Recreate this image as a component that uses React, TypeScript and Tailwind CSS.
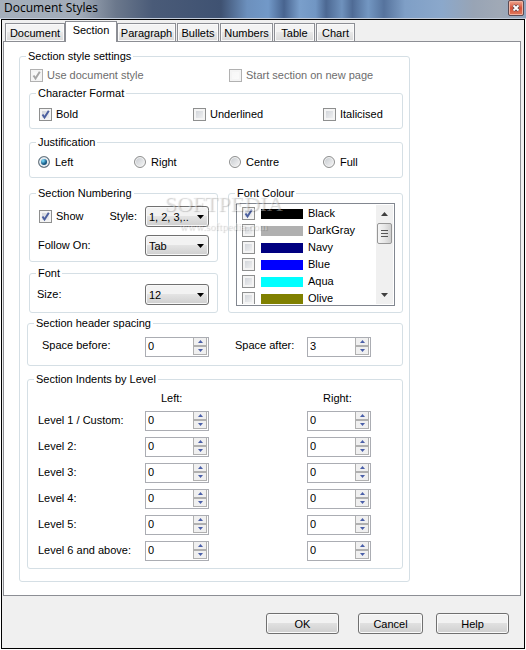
import { ReactNode, useId, useState } from "react";

const COLOURS = [
  { name: "Black", swatch: "bg-black" },
  { name: "DarkGray", swatch: "bg-[#b0b0b0]" },
  { name: "Navy", swatch: "bg-[#000080]" },
  { name: "Blue", swatch: "bg-[#0000ff]" },
  { name: "Aqua", swatch: "bg-[#00ffff]" },
  { name: "Olive", swatch: "bg-[#808000]" },
];

const LEVELS = ["Level 1 / Custom:", "Level 2:", "Level 3:", "Level 4:", "Level 5:", "Level 6 and above:"];

const TABS = [
  { name: "Document", width: "w-[60px]" },
  { name: "Section", width: "w-[52px]" },
  { name: "Paragraph", width: "w-[59px]" },
  { name: "Bullets", width: "w-[42px]" },
  { name: "Numbers", width: "w-[53px]" },
  { name: "Table", width: "w-[41px]" },
  { name: "Chart", width: "w-[39px]" },
];

function Group({ title, className = "", children }: { title: string; className?: string; children: ReactNode }) {
  return (
    <fieldset className={`min-w-0 rounded-[3px] border border-[#d5dfe5] ${className}`}>
      <legend className="ml-1.5 h-3.5 px-0.5 leading-[14px]">{title}</legend>
      {children}
    </fieldset>
  );
}

function CheckBox({ label, on = false, disabled = false }: { label: string; on?: boolean; disabled?: boolean }) {
  const [checked, setChecked] = useState(on);
  return (
    <label className={`flex h-4 items-center gap-1 ${disabled ? "text-[#6d6d6d]" : ""}`}>
      <CheckMark checked={checked} disabled={disabled} onChange={setChecked} />
      {label}
    </label>
  );
}

function CheckMark({ checked, disabled = false, onChange }: { checked: boolean; disabled?: boolean; onChange: (v: boolean) => void }) {
  return (
    <span className="grid size-[13px] shrink-0">
      <input
        type="checkbox"
        checked={checked}
        disabled={disabled}
        onChange={(e) => onChange(e.target.checked)}
        className="col-start-1 row-start-1 size-[13px] appearance-none border border-[#8e8f8f] bg-linear-to-br from-[#cbcfd5] to-[#f6f6f6] shadow-[inset_0_0_0_2px_#f4f4f4] disabled:border-[#b1b1b1] disabled:from-[#f6f6f6] disabled:to-[#fbfbfb]"
      />
      {checked && (
        <svg viewBox="0 0 13 13" className="pointer-events-none col-start-1 row-start-1 size-[13px]" fill="none" stroke={disabled ? "#a5a5a5" : "#4b5f9f"} strokeWidth="2">
          <path d="M3.5 6.5 5.5 9.5 9.8 2.8" />
        </svg>
      )}
    </span>
  );
}

function Radio({ label, on = false }: { label: string; on?: boolean }) {
  return (
    <label className="flex h-4 items-center gap-[5px]">
      <input
        type="radio"
        name="justification"
        defaultChecked={on}
        className="size-3 shrink-0 appearance-none rounded-full border border-[#8e8f8f] bg-linear-to-br from-[#c4c8cd] to-[#f8f8f8] shadow-[inset_0_0_0_1px_#f4f4f4] checked:border-[#6f7880] checked:bg-radial-[at_40%_35%] checked:from-[#6cc8ea] checked:from-10% checked:via-[#155a85] checked:via-40% checked:to-[#0b2c49] checked:shadow-[inset_0_0_0_2px_#e6eaee]"
      />
      {label}
    </label>
  );
}

function Picker({ id, value, options }: { id: string; value: string; options: string[] }) {
  return (
    <span className="grid w-16 shrink-0 items-center">
      <select
        id={id}
        defaultValue={value}
        className="col-start-1 row-start-1 h-[21px] w-16 appearance-none rounded-[3px] border border-[#707070] bg-linear-to-b from-[#f2f2f2] from-45% via-[#e3e3e3] via-50% to-[#cfcfcf] pl-[3px] pr-3 text-[11px] leading-[18px] shadow-[inset_0_0_0_1px_#f8f8f8]"
      >
        {options.map((o) => (
          <option key={o}>{o}</option>
        ))}
      </select>
      <svg viewBox="0 0 7 4" className="pointer-events-none col-start-1 row-start-1 mr-[5px] h-1 w-[7px] justify-self-end">
        <path d="M0 0h7L3.5 4z" />
      </svg>
    </span>
  );
}

function Spinner({ id, label, start = 0 }: { id?: string; label?: string; start?: number }) {
  const [value, setValue] = useState(start);
  return (
    <span className="flex h-5 w-16 shrink-0 border border-[#abadb3] bg-white">
      <input
        id={id}
        aria-label={label}
        value={value}
        onChange={(e) => setValue(Number(e.target.value) || 0)}
        className="h-4 min-w-0 flex-1 pl-0.5 text-[11px] leading-4 outline-none"
      />
      <span className="mr-px mb-px flex w-3.5 flex-col border-x border-b border-[#b0b0b0]">
        <button type="button" aria-label="Increase" onClick={() => setValue(value + 1)} className="flex h-2 items-center justify-center border-b border-[#b0b0b0] bg-[#f0f0f0]">
          <svg viewBox="0 0 5 3" className="h-[3px] w-[5px]" fill="#4a5fa8">
            <path d="M0 3h5L2.5 0z" />
          </svg>
        </button>
        <button type="button" aria-label="Decrease" onClick={() => setValue(value - 1)} className="flex flex-1 items-center justify-center border-t border-[#b0b0b0] bg-[#f0f0f0]">
          <svg viewBox="0 0 5 3" className="h-[3px] w-[5px]" fill="#4a5fa8">
            <path d="M0 0h5L2.5 3z" />
          </svg>
        </button>
      </span>
    </span>
  );
}

function ColourList() {
  const [chosen, setChosen] = useState("Black");
  return (
    <div className="flex h-[103px] border border-[#828790] bg-white p-px">
      <div className="flex-1 overflow-hidden pl-1">
        {COLOURS.map((c) => (
          <label key={c.name} className="flex h-[17px] items-center">
            <CheckMark checked={chosen === c.name} onChange={() => setChosen(c.name)} />
            <span className={`ml-1.5 h-2.5 w-[42px] ${c.swatch}`} />
            <span className="ml-[5px]">{c.name}</span>
          </label>
        ))}
      </div>
      <div className="flex w-[17px] flex-col items-center bg-[#f0f0f0]">
        <button type="button" aria-label="Scroll up" className="flex h-[18px] w-full items-center justify-center">
          <svg viewBox="0 0 7 4" className="h-1 w-[7px]" fill="#404040">
            <path d="M0 4h7L3.5 0z" />
          </svg>
        </button>
        <div className="flex h-[21px] w-[15px] flex-col items-center justify-center gap-0.5 rounded-[2px] border border-[#979797] bg-linear-to-r from-[#f5f5f5] via-[#e6e6e6] to-[#cfcfcf]">
          <span className="h-px w-[7px] bg-[#555]" />
          <span className="h-px w-[7px] bg-[#555]" />
          <span className="h-px w-[7px] bg-[#555]" />
        </div>
        <button type="button" aria-label="Scroll down" className="mt-auto flex h-[18px] w-full items-center justify-center">
          <svg viewBox="0 0 7 4" className="h-1 w-[7px]" fill="#404040">
            <path d="M0 0h7L3.5 4z" />
          </svg>
        </button>
      </div>
    </div>
  );
}

function TabStrip() {
  return (
    <div role="tablist" className="flex h-[21px] items-end gap-px pl-[3px]">
      {TABS.map((t) =>
        t.name === "Section" ? (
          <button key={t.name} role="tab" aria-selected="true" className={`relative -mx-px -mb-px h-[21px] ${t.width} border border-b-0 border-[#8c8e94] bg-white pb-1 leading-4`}>
            {t.name}
          </button>
        ) : (
          <button key={t.name} role="tab" aria-selected="false" className={`h-[18px] ${t.width} border border-b-0 border-[#8c8e94] bg-linear-to-b from-[#f3f3f3] from-45% via-[#e8e8e8] via-50% to-[#dadada] leading-4 shadow-[inset_0_0_0_1px_#fafafa]`}>
            {t.name}
          </button>
        ),
      )}
    </div>
  );
}

function PushButton({ children, width = "w-[73px]" }: { children: ReactNode; width?: string }) {
  return (
    <button
      type="button"
      className={`h-[21px] ${width} rounded-[3px] border border-[#707070] bg-linear-to-b from-[#f2f2f2] from-45% via-[#e0e0e0] via-50% to-[#cfcfcf] leading-[18px] shadow-[inset_0_0_0_1px_#fafafa]`}
    >
      {children}
    </button>
  );
}

export default function App() {
  const id = useId();
  return (
    <div className="bg-white font-['Liberation_Sans',Arial,sans-serif] text-[11px] text-black">
      <header className="flex h-[19px] items-start justify-between border-b border-[#c3ccda] bg-[linear-gradient(90deg,#a5afbb_0%,#a2acb9_15%,#6b788c_22%,#4a5b78_29%,#3f5272_42%,#6c90bd_47%,#7299c8_51%,#48648f_54%,#7a9fcb_57%,#7196c3_60%,#4c6892_62%,#6f92bd_65%,#4f6b95_67%,#7397c2_70%,#56739d_73%,#7f9fc6_77%,#8ba8cb_84%,#98a4b5_90%,#a0a9b6_95%,#8fa5c0_100%)] pl-1 pr-0.5">
        <h1 className="font-['Open_Sans',sans-serif] text-[12px] leading-4">Document Styles</h1>
        <button type="button" aria-label="Close" className="flex size-4 items-center justify-center rounded-[2px] border border-[#5b4a52] bg-linear-to-b from-[#eda590] via-[#d4513a] to-[#e0795c] shadow-[inset_0_0_0_1px_#f0b3a2]">
          <svg viewBox="0 0 8 8" className="size-2" fill="none">
            <path d="M1.5 1.5l5 5M6.5 1.5l-5 5" stroke="#5a4550" strokeWidth="3.2" />
            <path d="M1.5 1.5l5 5M6.5 1.5l-5 5" stroke="#fff" strokeWidth="1.8" />
          </svg>
        </button>
      </header>
      <main className="mx-px mb-px border border-black bg-[#f0f0f0]">
        <TabStrip />
        <div className="mr-[3px] ml-px border border-[#8c8e94] bg-white pt-[7px] pb-[13px] pl-[15px]">
          <Group title="Section style settings" className="w-[391px] max-w-full">
            <div className="pr-1.5 pb-3 pl-[7px]">
              <div className="pl-0.5">
                <div className="grid grid-cols-[199px_auto] pt-1 pb-[3px] pl-px">
                  <CheckBox label="Use document style" on disabled />
                  <CheckBox label="Start section on new page" disabled />
                </div>
                <Group title="Character Format">
                  <div className="grid grid-cols-[154px_130px_auto] py-1.5 pl-[9px]">
                    <CheckBox label="Bold" on />
                    <CheckBox label="Underlined" />
                    <CheckBox label="Italicised" />
                  </div>
                </Group>
                <Group title="Justification" className="mt-1.5">
                  <div className="grid grid-cols-[96px_95px_94px_auto] pt-[5px] pb-[7px] pl-2">
                    <Radio label="Left" on />
                    <Radio label="Right" />
                    <Radio label="Centre" />
                    <Radio label="Full" />
                  </div>
                </Group>
                <div className="relative mt-2 grid grid-cols-[189px_auto] gap-x-2.5">
                  <div className="flex flex-col gap-1">
                    <Group title="Section Numbering">
                      <div className="grid gap-2 pt-1.5 pr-2 pb-[5px] pl-2">
                        <div className="flex items-center">
                          <div className="flex-1 pl-px">
                            <CheckBox label="Show" on />
                          </div>
                          <label htmlFor={`${id}style`} className="pr-2">Style:</label>
                          <Picker id={`${id}style`} value="1, 2, 3,.." options={["1, 2, 3,..", "a, b, c,..", "i, ii, iii,.."]} />
                        </div>
                        <div className="flex items-center justify-between">
                          <label htmlFor={`${id}follow`}>Follow On:</label>
                          <Picker id={`${id}follow`} value="Tab" options={["Tab", "Space"]} />
                        </div>
                      </div>
                    </Group>
                    <Group title="Font">
                      <div className="flex items-center justify-between pt-1 pr-2 pb-[7px] pl-[7px]">
                        <label htmlFor={`${id}size`}>Size:</label>
                        <Picker id={`${id}size`} value="12" options={["10", "12", "14"]} />
                      </div>
                    </Group>
                  </div>
                  <Group title="Font Colour">
                    <div className="pt-[3px] pr-[7px] pb-1.5 pl-[7px]">
                      <ColourList />
                    </div>
                  </Group>
                  <div aria-hidden="true" className="pointer-events-none absolute top-1.5 left-[134px] flex w-[121px] flex-col items-center gap-0.5 font-['Liberation_Serif',serif] text-white/40 [text-shadow:1px_1px_1px_rgb(0_0_0/0.2)]">
                    <span className="text-[22px] leading-6">SOFTPEDIA</span>
                    <span className="text-[11px] leading-4">www.softpedia.com</span>
                  </div>
                </div>
              </div>
              <Group title="Section header spacing" className="mt-[3px]">
                <div className="grid grid-cols-[103px_90px_72px_auto] items-start pt-[7px] pb-2 pl-3.5">
                  <label htmlFor={`${id}before`} className="leading-4">Space before:</label>
                  <Spinner id={`${id}before`} />
                  <label htmlFor={`${id}after`} className="leading-4">Space after:</label>
                  <Spinner id={`${id}after`} start={3} />
                </div>
              </Group>
              <Group title="Section Indents by Level" className="mt-1.5">
                <div className="grid grid-cols-[107px_162px_auto] items-start gap-y-1.5 pb-[7px] pl-2.5">
                  <span className="col-start-2 h-[19px] pt-1 pl-4 leading-4">Left:</span>
                  <span className="h-[19px] pt-1 pl-4 leading-4">Right:</span>
                  {LEVELS.map((level) => (
                    <div key={level} className="contents">
                      <span className="leading-[18px]">{level}</span>
                      <Spinner label={`${level} left`} />
                      <Spinner label={`${level} right`} />
                    </div>
                  ))}
                </div>
              </Group>
            </div>
          </Group>
        </div>
        <footer className="flex justify-end pt-[17px] pr-[15px] pb-3.5">
          <PushButton>OK</PushButton>
          <span className="w-[19px]" />
          <PushButton width="w-[65px]">Cancel</PushButton>
          <span className="w-[13px]" />
          <PushButton>Help</PushButton>
        </footer>
      </main>
    </div>
  );
}
